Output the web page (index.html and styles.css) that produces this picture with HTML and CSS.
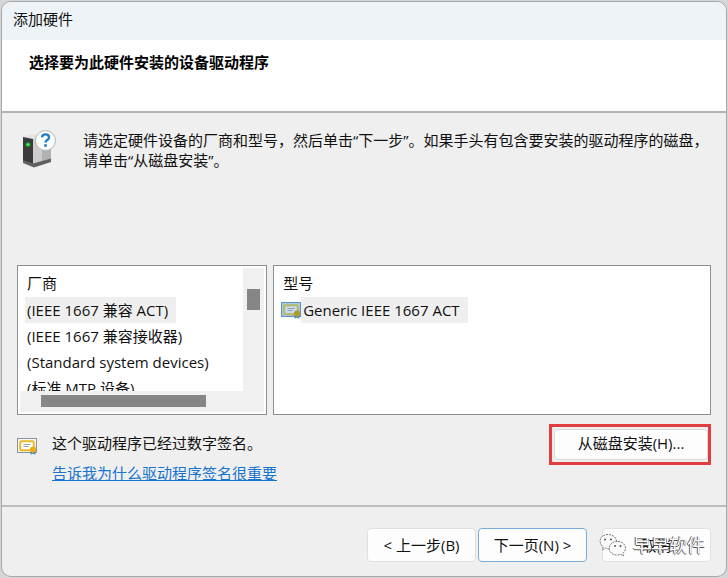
FILE: index.html
```html
<!DOCTYPE html>
<html lang="zh-CN">
<head>
<meta charset="utf-8">
<title>添加硬件</title>
<link rel="stylesheet" href="styles.css">
</head>
<body>
<svg class="defs" aria-hidden="true">
  <symbol id="cert" viewBox="0 0 20 18">
    <rect class="cert-edge" x="0.5" y="1.5" width="19" height="14"/>
    <rect class="cert-ring" x="3.2" y="4.2" width="13.6" height="9" rx="1.5"/>
    <path class="cert-lines" d="M6.5 7.500h7M6.500 9.500h5"/>
    <path class="cert-ribbon" d="M13.600 13.500v4.200l2.400-1.200 2.400 1.200v-4.200z"/>
    <circle class="cert-seal" cx="16" cy="12.600" r="3.100"/>
  </symbol>
</svg>
<main class="window">
  <header class="titlebar">添加硬件</header>
  <section class="banner"><h1>选择要为此硬件安装的设备驱动程序</h1></section>

  <section class="body">
    <div class="intro">
      <svg class="device" viewBox="0 0 36 38" aria-hidden="true">
        <path d="M1 7l9-3 19 3-18 3z" fill="#e3e3e3"/>
        <path d="M11 9l18-3v25l-18 5z" fill="#cdcdcd"/>
        <path d="M20 8l9-2v25l-9 2z" fill="#b2b2b2"/>
        <path d="M1 7l10 2v25l-10-3z" fill="#3a3c3c"/>
        <path d="M1 30l10 3.500 18-5v3.500l-17 5.500-11-4.500z" fill="#5f6060"/>
        <circle cx="6" cy="14.500" r="2.600" fill="#277c30"/>
        <circle cx="6" cy="14.500" r="1.600" fill="#45ef55"/>
        <circle cx="23.500" cy="10.500" r="10" fill="#fbfcfd" stroke="#b5b5b5"/>
        <path d="M20 7.400c.2-4 7-4 7 0 0 2.700-3.500 2.500-3.500 5.200" fill="none" stroke="#237fc4" stroke-width="2.400"/>
        <rect x="22.200" y="14.200" width="2.600" height="2.600" fill="#237fc4"/>
      </svg>
      <p>请选定硬件设备的厂商和型号，然后单击“下一步”。如果手头有包含要安装的驱动程序的磁盘，请单击“从磁盘安装”。</p>
    </div>

    <div class="lists">
      <div class="listbox vendors">
        <div class="view">
          <table>
            <thead><tr><th>厂商</th></tr></thead>
            <tbody>
              <tr><td><span class="item selected">(IEEE 1667 兼容 ACT)</span></td></tr>
              <tr><td><span class="item">(IEEE 1667 兼容接收器)</span></td></tr>
              <tr><td><span class="item">(Standard system devices)</span></td></tr>
              <tr><td><span class="item">(标准 MTP 设备)</span></td></tr>
            </tbody>
          </table>
        </div>
        <div class="vbar"><div class="thumb"></div></div>
        <div class="hbar"><div class="thumb"></div></div>
      </div>
      <div class="listbox models">
        <table>
          <thead><tr><th>型号</th></tr></thead>
          <tbody>
            <tr><td><span class="model"><svg class="cert blue" aria-hidden="true"><use href="#cert"/></svg><span class="item selected">Generic IEEE 1667 ACT</span></span></td></tr>
          </tbody>
        </table>
      </div>
    </div>

    <div class="signature">
      <svg class="cert" aria-hidden="true"><use href="#cert"/></svg>
      <div class="signed">
        <p>这个驱动程序已经过数字签名。</p>
        <a href="#signing">告诉我为什么驱动程序签名很重要</a>
      </div>
      <div class="highlight"><button type="button" class="disk">从磁盘安装(H)...</button></div>
    </div>
  </section>

  <footer class="actions">
    <button type="button">&lt; 上一步(B)</button>
    <button type="button" class="default">下一页(N) &gt;</button>
    <div class="cancel">
      <button type="button">取消</button>
      <div class="watermark">
        <svg viewBox="0 0 28 24" aria-hidden="true">
          <path d="M10.500 15.500c-2 .5-3-.1-4-.4L3.500 17l.6-3.100C-1.500 9.500 1 1.500 9 1.500c5 0 8 3 8.500 6.500"/>
          <path d="M18.500 8.500c-11 0-11 13.500-.5 13.500 1.500 0 2.500-.2 3.500-.6l3 1.600-.6-2.700c5-4 2.600-11.800-5.400-11.800z"/>
          <g class="eyes"><circle cx="6" cy="6.500" r="1"/><circle cx="12" cy="6.500" r="1"/><circle cx="16" cy="13" r="1"/><circle cx="21.500" cy="13" r="1"/></g>
        </svg>
        <span>早早软件</span>
      </div>
    </div>
  </footer>
</main>
</body>
</html>
```
FILE: styles.css
```css
* { box-sizing: border-box; }
html { height: 100%; }
body {
  margin: 0;
  height: 100%;
  padding: 1px;
  background: #d4d6d7;
  color: #111;
  font: 15px/20px "Open Sans", "Noto Sans CJK SC", sans-serif;
}
h1, p { margin: 0; font-size: 15px; }
button { font: inherit; color: inherit; }
.defs { position: absolute; width: 0; height: 0; }

.window {
  display: flex;
  flex-direction: column;
  min-height: 100%;
  border: 1px solid #a5a7a9;
  border-radius: 10px;
  background: #efefef;
  overflow: hidden;
}
.titlebar { height: 38px; padding: 7px 11px; background: #eef3f8; }
.banner {
  height: 73px;
  padding: 12px 27px;
  background: #fff;
  border-bottom: 2px solid #b2b2b2;
}
.banner h1 { font-weight: 700; line-height: 20px; color: #000; }

.body { flex: 1; padding: 17px 15px 0; }
.intro { display: flex; gap: 25px; height: 135px; padding-left: 5px; }
.intro p { flex: 1; }
.device { width: 36px; height: 38px; flex: none; }

.lists {
  display: grid;
  grid-template-columns: 4fr 7fr;
  grid-template-rows: 150px;
  gap: 6px;
}
.listbox { border: 1px solid #8c8f92; background: #fff; padding: 2px; min-width: 0; }
.vendors {
  display: grid;
  grid-template-columns: minmax(0, 1fr) 21px;
  grid-template-rows: minmax(0, 1fr) 21px;
}
.view { overflow: hidden; }
table { border-collapse: collapse; white-space: nowrap; }
th { height: 29px; padding: 0 7px; text-align: left; font-weight: 400; }
td { height: 26px; padding: 0 0 0 5px; }
.item { display: block; width: max-content; height: 26px; padding: 0 8px 0 2px; line-height: 26px; }
.selected { background: #efefef; }
.model { display: flex; align-items: center; }

.vbar { background: #f0f0f0; padding: 21px 4px; }
.vbar .thumb { height: 21px; background: #868686; }
.hbar { grid-column: 1 / 3; background: #f0f0f0; padding: 4px 21px; }
.hbar .thumb { width: 82%; max-width: 165px; height: 12px; background: #868686; }

.cert {
  --edge: #8b9299;
  --paper: #f6f8fa;
  --inner: #fff;
  --ring: #e9bb25;
  --seal: #efac19;
  width: 20px;
  height: 18px;
  flex: none;
}
.blue { --edge: #5b93c2; --paper: #a9cae2; --inner: #c2dbed; --ring: #b9b765; --seal: #b39a2c; }
.cert-edge { fill: var(--paper); stroke: var(--edge); }
.cert-ring { fill: var(--inner); stroke: var(--ring); stroke-width: 2px; }
.cert-lines { fill: none; stroke: #9da3a8; stroke-width: 1px; }
.cert-seal { fill: var(--seal); }
.cert-ribbon { fill: #3985bf; }

.signature { display: flex; align-items: flex-start; padding-top: 9px; }
.signature > .cert { margin-top: 13px; }
.signed { flex: 1; padding: 9px 0 0 15px; }
.signed p { margin-bottom: 10px; }
.signed a { color: #1673ce; }
.highlight { border: 3px solid #e23e42; padding: 2px 0 2px 2px; }
.disk {
  display: block;
  width: 154px;
  height: 31px;
  padding: 0 0 4px;
  border: 1px solid #dadada;
  border-radius: 4px;
  background: #fdfdfd;
}

.actions {
  display: flex;
  justify-content: flex-end;
  gap: 2px;
  height: 71px;
  padding: 21px 15px 0;
  border-top: 2px solid #bdbdbd;
}
.actions button {
  width: 109px;
  height: 34px;
  padding: 0;
  border: 1px solid #e0e0e0;
  border-radius: 4px;
  background: #fdfdfd;
}
.actions .default { border-color: #79acd9; }
.cancel { position: relative; margin-left: 13px; }
.watermark {
  position: absolute;
  top: 5px;
  right: 6px;
  display: flex;
  align-items: center;
  gap: 6px;
  white-space: nowrap;
  font-size: 18px;
  line-height: 24px;
  color: #fdfdfd;
  text-shadow: -1px 0 #555, 0 1px #555;
  pointer-events: none;
}
.watermark svg { width: 28px; height: 24px; fill: #fafafa; stroke: #777; stroke-width: 1px; stroke-dasharray: 2 1; }
.watermark .eyes { fill: #555; stroke: none; }
```
